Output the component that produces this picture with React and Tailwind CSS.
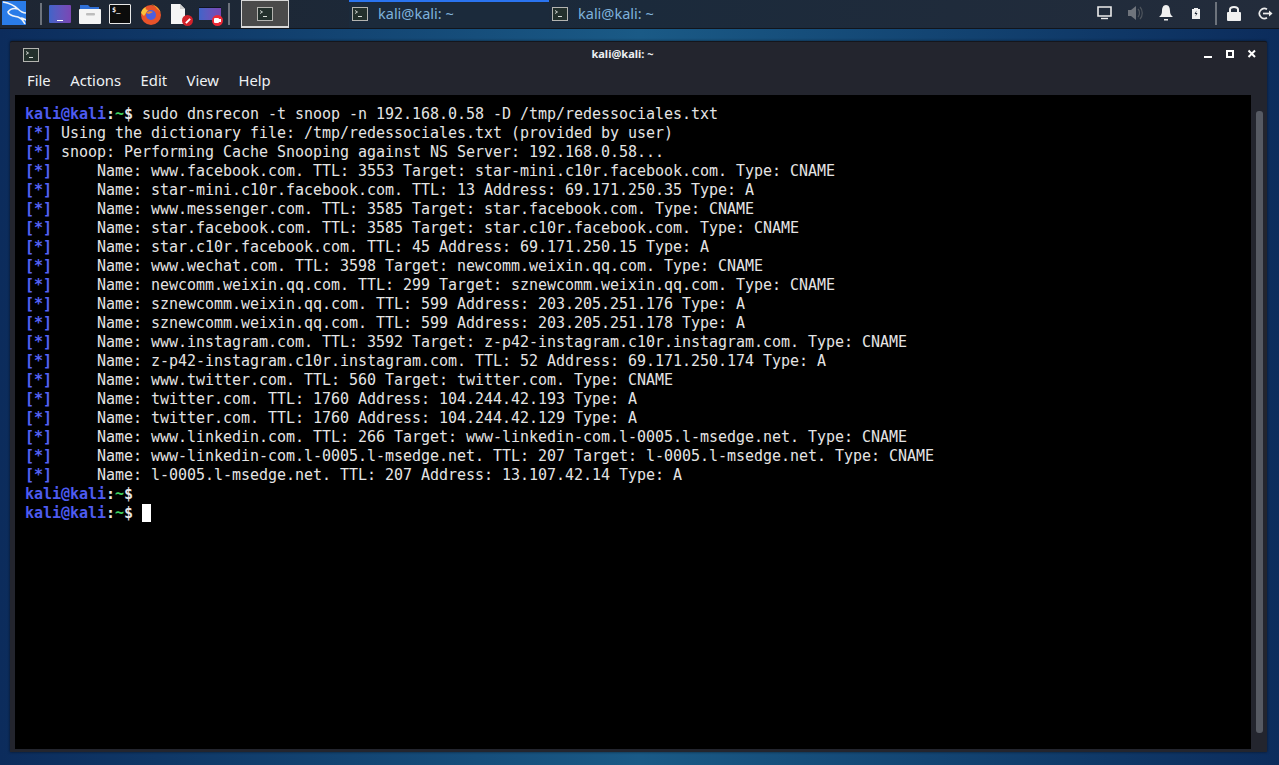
import React from "react";

const lines = [
  "Using the dictionary file: /tmp/redessociales.txt (provided by user)",
  "snoop: Performing Cache Snooping against NS Server: 192.168.0.58...",
  "    Name: www.facebook.com. TTL: 3553 Target: star-mini.c10r.facebook.com. Type: CNAME",
  "    Name: star-mini.c10r.facebook.com. TTL: 13 Address: 69.171.250.35 Type: A",
  "    Name: www.messenger.com. TTL: 3585 Target: star.facebook.com. Type: CNAME",
  "    Name: star.facebook.com. TTL: 3585 Target: star.c10r.facebook.com. Type: CNAME",
  "    Name: star.c10r.facebook.com. TTL: 45 Address: 69.171.250.15 Type: A",
  "    Name: www.wechat.com. TTL: 3598 Target: newcomm.weixin.qq.com. Type: CNAME",
  "    Name: newcomm.weixin.qq.com. TTL: 299 Target: sznewcomm.weixin.qq.com. Type: CNAME",
  "    Name: sznewcomm.weixin.qq.com. TTL: 599 Address: 203.205.251.176 Type: A",
  "    Name: sznewcomm.weixin.qq.com. TTL: 599 Address: 203.205.251.178 Type: A",
  "    Name: www.instagram.com. TTL: 3592 Target: z-p42-instagram.c10r.instagram.com. Type: CNAME",
  "    Name: z-p42-instagram.c10r.instagram.com. TTL: 52 Address: 69.171.250.174 Type: A",
  "    Name: www.twitter.com. TTL: 560 Target: twitter.com. Type: CNAME",
  "    Name: twitter.com. TTL: 1760 Address: 104.244.42.193 Type: A",
  "    Name: twitter.com. TTL: 1760 Address: 104.244.42.129 Type: A",
  "    Name: www.linkedin.com. TTL: 266 Target: www-linkedin-com.l-0005.l-msedge.net. Type: CNAME",
  "    Name: www-linkedin-com.l-0005.l-msedge.net. TTL: 207 Target: l-0005.l-msedge.net. Type: CNAME",
  "    Name: l-0005.l-msedge.net. TTL: 207 Address: 13.107.42.14 Type: A",
];

function TermIcon({ size = 16 }) {
  return (
    <svg width={size} height={size * 0.875} viewBox="0 0 16 14" className="shrink-0">
      <rect x="0.5" y="0.5" width="15" height="13" fill="#23302c" stroke="#b4b4b0" />
      <path d="M3 3.5 L5.5 5 L3 6.5" fill="none" stroke="#d8dcd8" strokeWidth="0.9" />
      <path d="M6 9.5 H10" stroke="#d8dcd8" strokeWidth="1" />
    </svg>
  );
}

function Sep() {
  return <div className="w-[2px] h-[22px] bg-[#6d737c] shrink-0" />;
}

function Prompt() {
  return (
    <>
      <span className="font-bold text-[#4d5bf0]">kali@kali</span>
      <span className="font-bold text-[#e6e6e6]">:</span>
      <span className="font-bold text-[#3ed15f]">~</span>
      <span className="font-bold text-[#e6e6e6]">$</span>
    </>
  );
}

function Star() {
  return <span className="font-bold text-[#5563f5]">[*]</span>;
}

function Task({ active }) {
  return (
    <div className={"w-[200px] h-full flex items-center pl-[3px] gap-[10px] text-[#7fb2dc] text-[14.5px] relative " + (active ? "bg-[#1b2a3b]" : "")}>
      {active && <div className="absolute left-0 right-0 top-0 h-[2px] bg-[#2a74f0]" />}
      <TermIcon />
      <span className="-mt-[1px]">kali@kali: ~</span>
    </div>
  );
}

export default function App() {
  return (
    <div className="w-[1279px] h-[765px] overflow-hidden flex flex-col bg-gradient-to-r from-[#0c2c5c] via-[#1a5a86] to-[#0c2c5c] [font-family:'Noto_Sans','Open_Sans',sans-serif]">
      {/* panel */}
      <div className="h-[29px] shrink-0 flex items-stretch bg-gradient-to-r from-[#1e2633] via-[#1b2a3b] to-[#232c3b] border-b border-[#11151c]">
        <div className="w-[24px] h-[24px] bg-[#2a7ce8] ml-[2px] mt-[1px] shrink-0">
          <svg viewBox="0 0 24 24" width="24" height="24">
            <path d="M1 1 C7 2 12 4 16 8 C12 7 8 8 6 11 C7 15 12 15 16 16 C19 17 21 19 23 23 M16 8 C18 10 21 12 24 12 M19 17 C21 17 22 18 24 19" fill="none" stroke="#f1f4f8" strokeWidth="1.6" />
          </svg>
        </div>
        <div className="flex items-center ml-[14px]"><Sep /></div>
        <div className="flex items-center ml-[7px]">
          <div className="w-[22px] h-[18px] bg-gradient-to-r from-[#3f64c8] to-[#7a46b4] rounded-[1px] flex items-end justify-center pb-[2px] shrink-0">
            <div className="w-[6px] h-[1px] bg-white" />
          </div>
          <svg width="22" height="20" viewBox="0 0 22 20" className="ml-[8px] shrink-0">
            <path d="M1 1 H9 L11 3 H20 V8 H1 Z" fill="#2f6fd6" />
            <rect x="0" y="5" width="22" height="15" rx="1" fill="#f4f4f4" />
            <rect x="7" y="9" width="9" height="2.5" rx="1" fill="#bdbdbd" />
          </svg>
          <div className="w-[22px] h-[20px] ml-[8px] bg-[#0c0c0c] border border-[#e8e8e8] rounded-[1px] text-[#eee] text-[7px] leading-[11px] pl-[2px] font-bold [font-family:'DejaVu_Sans_Mono',monospace] shrink-0">$_</div>
          <svg width="22" height="22" viewBox="0 0 22 22" className="ml-[9px] shrink-0">
            <circle cx="11" cy="12" r="10" fill="#e8532a" />
            <path d="M11 1 C16 2 21 7 21 12 C21 9 19 7 17 6 C16 4 14 2 11 1 Z" fill="#f7a42c" />
            <path d="M1 10 C2 6 4 5 6 4 C5 6 6 7 8 7 L4 13 Z" fill="#f9c23c" />
            <circle cx="11" cy="12" r="5" fill="#4a5fe0" />
            <path d="M6 10 C8 8 11 8 13 9 L9 11 Z" fill="#f0842c" />
          </svg>
          <div className="relative w-[22px] h-[23px] ml-[9px] shrink-0">
            <svg width="14" height="20" viewBox="0 0 14 20" className="mt-[1px]">
              <path d="M0 0 H9 L14 5 V20 H0 Z" fill="#f5f5f5" />
              <path d="M9 0 L14 5 H9 Z" fill="#cfcfcf" />
            </svg>
            <div className="absolute right-0 bottom-0 w-[11px] h-[11px] rounded-full bg-[#d3222a]">
              <div className="absolute left-[3px] top-[5px] w-[6px] h-[2px] bg-white -rotate-45" />
            </div>
          </div>
          <div className="relative w-[24px] h-[23px] ml-[6px] shrink-0">
            <div className="mt-[4px] w-[22px] h-[13px] bg-gradient-to-r from-[#3f64c8] to-[#7a46b4] border-t-[1px] border-[#0e1420]" />
            <div className="absolute right-0 bottom-0 w-[11px] h-[11px] rounded-full bg-[#ee2a36]">
              <div className="absolute left-[2px] top-[3px] w-[5px] h-[5px] bg-white rounded-[1px]" />
              <div className="absolute left-[7px] top-[4px] w-[2px] h-[3px] bg-white" />
            </div>
          </div>
        </div>
        <div className="flex items-center ml-[5px]"><Sep /></div>
        <div className="w-[48px] h-[28px] ml-[11px] bg-[#4a4a4a] border border-[#d8d8d8] border-b-2 flex items-center justify-center shrink-0">
          <TermIcon />
        </div>
        <div className="w-[60px] shrink-0" />
        <Task active />
        <Task />
        <div className="flex-1" />
        <div className="relative w-[186px] shrink-0">
          <svg width="15" height="14" viewBox="0 0 15 14" className="absolute left-[4px] top-[6px]">
            <path d="M1 1 H14 V10 H1 Z" fill="none" stroke="#ececec" strokeWidth="1.6" />
            <path d="M4 12.5 H11" stroke="#ececec" strokeWidth="1.4" />
          </svg>
          <svg width="15" height="14" viewBox="0 0 15 14" className="absolute left-[35px] top-[6px]">
            <path d="M0 4 H3 L8 0 V14 L3 10 H0 Z" fill="#6f747c" />
            <path d="M10 3 C12 5 12 9 10 11 M12 1 C15 4 15 10 12 13" fill="none" stroke="#4f555d" strokeWidth="1.2" />
          </svg>
          <svg width="14" height="16" viewBox="0 0 14 16" className="absolute left-[66px] top-[5px]">
            <path d="M7 0 C10 0 11 3 11 6 C11 9 12 10 14 12 H0 C2 10 3 9 3 6 C3 3 4 0 7 0 Z" fill="#f0f0f0" />
            <rect x="5" y="14" width="4" height="1.5" fill="#f0f0f0" />
          </svg>
          <svg width="8" height="11" viewBox="0 0 8 11" className="absolute left-[99px] top-[8px]">
            <path d="M0 1 H2 V0 H6 V1 H8 V11 H0 Z" fill="#f0f0f0" />
            <path d="M4.5 2.5 L2.5 6 H4 L3.5 8.5 L5.5 5 H4 Z" fill="#1e2633" />
          </svg>
          <div className="absolute left-[122px] top-[2px] w-[2px] h-[23px] bg-[#6d737c]" />
          <svg width="14" height="16" viewBox="0 0 14 16" className="absolute left-[134px] top-[5px]">
            <rect x="0" y="7" width="14" height="9" rx="1" fill="#f0f0f0" />
            <path d="M3 7 V4.5 C3 1 11 1 11 4.5 V7" fill="none" stroke="#f0f0f0" strokeWidth="2" />
          </svg>
          <svg width="15" height="13" viewBox="0 0 15 13" className="absolute left-[165px] top-[7px]">
            <path d="M9 2.2 A5 5 0 1 0 9 10.8" fill="none" stroke="#ececec" strokeWidth="1.7" />
            <path d="M5 6.5 H12" stroke="#ececec" strokeWidth="1.7" />
            <path d="M11 3.5 L14.5 6.5 L11 9.5 Z" fill="#ececec" />
          </svg>
        </div>
      </div>

      {/* window */}
      <div className="mt-[12px] ml-[10px] w-[1257px] h-[711px] shrink-0 bg-[#23252e] rounded-t-[2px] flex flex-col border-t border-[#14161c] shadow-[0_0_3px_rgba(0,0,0,0.6)]">
        <div className="h-[25px] shrink-0 flex items-center relative">
          <div className="ml-[13px] mt-[1px]"><TermIcon /></div>
          <div className="absolute left-0 right-[32px] top-[4px] text-center text-[11px] leading-[16px] font-bold text-[#eceff2] [font-family:'Noto_Sans',sans-serif]">kali@kali: ~</div>
          <div className="absolute right-[11px] top-0 h-full">
            <svg width="54" height="25" viewBox="0 0 54 25">
              <path d="M2 15 H10" stroke="#fff" strokeWidth="2" />
              <rect x="25" y="9" width="6" height="6" fill="none" stroke="#fff" strokeWidth="2" />
              <path d="M46.5 8.5 L53 15 M53 8.5 L46.5 15" stroke="#fff" strokeWidth="2" />
            </svg>
          </div>
        </div>
        <div className="h-[28px] shrink-0 flex items-center pl-[17px] gap-[19.5px] text-[14.8px] text-[#eef1f4] pb-[1px]">
          <span>File</span><span>Actions</span><span>Edit</span><span>View</span><span>Help</span>
        </div>
        <div className="flex-1 flex pl-[5px] pb-[3px] min-h-0">
          <div className="w-[1236px] h-full bg-black pl-[10px] pt-[10px] text-[15px] leading-[19px] text-[#e4e4e4] whitespace-pre [font-family:'DejaVu_Sans_Mono','Liberation_Mono',monospace] tracking-[-0.03px]">
            <div><Prompt /> sudo dnsrecon -t snoop -n 192.168.0.58 -D /tmp/redessociales.txt</div>
            {lines.map((l, i) => (
              <div key={i}><Star /> {l}</div>
            ))}
            <div><Prompt /></div>
            <div className="flex"><Prompt /><span> </span><span className="inline-block w-[9px] h-[18px] bg-white" /></div>
          </div>
          <div className="flex-1 flex justify-center pt-[16px] pb-[16px] pl-[1px]">
            <div className="w-[7px] h-full bg-[#565a63] rounded-[3px]" />
          </div>
        </div>
      </div>
    </div>
  );
}
